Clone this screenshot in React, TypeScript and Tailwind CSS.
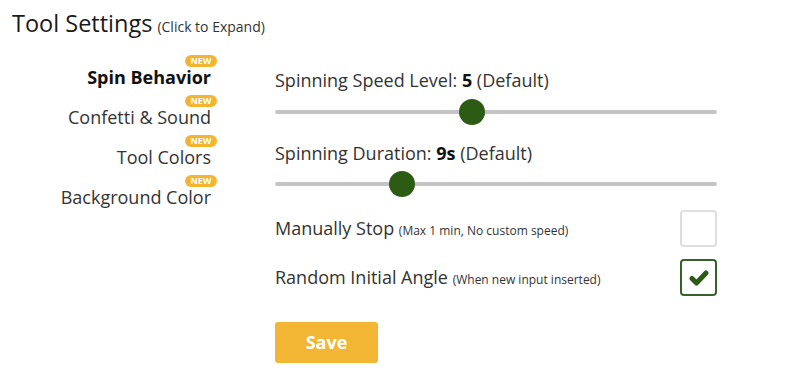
import { useState } from 'react';

const menu = ['Spin Behavior', 'Confetti & Sound', 'Tool Colors', 'Background Color'];

const Slider = ({ pos }: { pos: number }) => (
  <div className="relative h-[26px] w-full">
    <div className="absolute left-0 right-0 top-[11px] h-[4px] rounded-full bg-[#c4c4c4]" />
    <div
      className="absolute top-0 h-[26px] w-[26px] rounded-full bg-[#2c5b14]"
      style={{ left: pos - 13 }}
    />
  </div>
);

const Checkbox = ({ checked }: { checked: boolean }) => (
  <div
    className={`flex h-[37px] w-[37px] items-center justify-center rounded-[4px] border-2 ${
      checked ? 'border-[#35612a]' : 'border-[#dedede]'
    }`}
  >
    {checked && (
      <svg width="20" height="18" viewBox="0 0 20 18">
        <path d="M3 9.5 L7.5 14 L17 4" fill="none" stroke="#2c5b14" strokeWidth="5" strokeLinecap="round" strokeLinejoin="round" />
      </svg>
    )}
  </div>
);

export default function App() {
  const [active] = useState(0);
  return (
    <div className="h-[375px] w-[800px] bg-white text-[#222] font-['Open_Sans',sans-serif]">
      <div className="flex items-baseline pl-[12px] pt-[8px]">
        <h2 className="text-[23.5px] leading-[30px] text-[#1a1a1a]">Tool Settings</h2>
        <span className="ml-[5px] text-[14px] text-[#333]">(Click to Expand)</span>
      </div>

      <div className="mt-[18px] flex">
        <div className="w-[211px] text-right">
          {menu.map((m, i) => (
            <div key={m} className="relative flex h-[40px] items-center justify-end pt-[1px]">
              <span className="absolute right-[-6px] top-[-1px] h-[12px] w-[32px] rounded-full bg-[#f3b431] text-center text-[9px] font-bold leading-[12px] text-white">
                NEW
              </span>
              <span
                className={`text-[18px] leading-[24px] ${
                  i === active ? 'font-bold text-[#111]' : 'text-[#333]'
                }`}
              >
                {m}
              </span>
            </div>
          ))}
        </div>

        <div className="ml-[64px] w-[442px] pt-[12px]">
          <div className="text-[18px] leading-[24px] text-[#333]">
            Spinning Speed Level: <b className="text-[#111]">5</b> (Default)
          </div>
          <div className="mt-[7px]">
            <Slider pos={197} />
          </div>
          <div className="mt-[16px] text-[18px] leading-[24px] text-[#333]">
            Spinning Duration: <b className="text-[#111]">9s</b> (Default)
          </div>
          <div className="mt-[6px]">
            <Slider pos={127} />
          </div>

          <div className="mt-[13px] flex items-center justify-between">
            <div className="text-[18px] text-[#333]">
              Manually Stop <span className="text-[12px]">(Max 1 min, No custom speed)</span>
            </div>
            <Checkbox checked={false} />
          </div>
          <div className="mt-[12px] flex items-center justify-between">
            <div className="text-[18px] text-[#333]">
              Random Initial Angle <span className="text-[12px]">(When new input inserted)</span>
            </div>
            <Checkbox checked={true} />
          </div>

          <button className="mt-[26px] h-[41px] w-[103px] rounded-[3px] bg-[#f3b534] text-[18px] font-bold text-white">
            Save
          </button>
        </div>
      </div>
    </div>
  );
}
